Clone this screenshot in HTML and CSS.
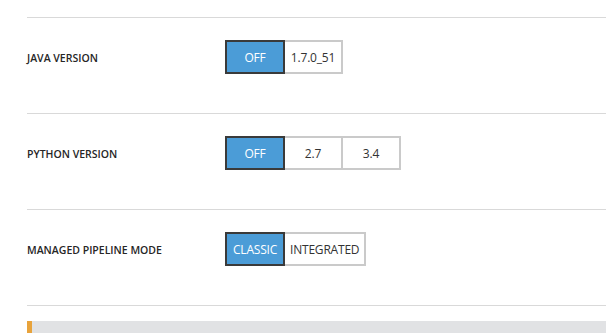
FILE: index.html
```html
<!DOCTYPE html>
<html>
<head>
<meta charset="utf-8">
<link rel="stylesheet" href="styles.css">
</head>
<body>
<div class="page">
  <div class="top"></div>
  <div class="row">
    <div class="label">JAVA VERSION</div>
    <div class="seg">
      <span class="opt active">OFF</span>
      <span class="opt">1.7.0_51</span>
    </div>
  </div>
  <div class="row">
    <div class="label">PYTHON VERSION</div>
    <div class="seg">
      <span class="opt active">OFF</span>
      <span class="opt">2.7</span>
      <span class="opt">3.4</span>
    </div>
  </div>
  <div class="row">
    <div class="label">MANAGED PIPELINE MODE</div>
    <div class="seg">
      <span class="opt active">CLASSIC</span>
      <span class="opt">INTEGRATED</span>
    </div>
  </div>
  <div class="notice"></div>
</div>
</body>
</html>
```
FILE: styles.css
```css
html, body {
  margin: 0;
  padding: 0;
  background: #fff;
}
body {
  font-family: "Open Sans", "Noto Sans", sans-serif;
  color: #222;
  overflow: hidden;
}
.page {
  padding-left: 27px;
}
.top {
  height: 17px;
  border-bottom: 1px solid #d9d9d9;
}
.row {
  display: flex;
  align-items: center;
  padding: 22px 0 39px;
  border-bottom: 1px solid #d9d9d9;
}
.label {
  width: 198px;
  padding-top: 1px;
  font-size: 10.5px;
  font-weight: 600;
  color: #262626;
}
.seg {
  display: flex;
}
.opt {
  box-sizing: border-box;
  height: 34px;
  min-width: 60px;
  padding: 0 5px;
  display: flex;
  align-items: center;
  justify-content: center;
  border: 2px solid #cacaca;
  background: #fff;
  color: #333;
  font-size: 12px;
  letter-spacing: -0.2px;
  margin-left: -2px;
}
.opt:first-child {
  margin-left: 0;
}
.opt.active {
  position: relative;
  z-index: 1;
  background: #4b9cd7;
  border-color: #3a3a3a;
  color: #fff;
}
.notice {
  margin-top: 15px;
  height: 12px;
  background: #e1e2e4;
  border-left: 5px solid #e8a33c;
}
```
